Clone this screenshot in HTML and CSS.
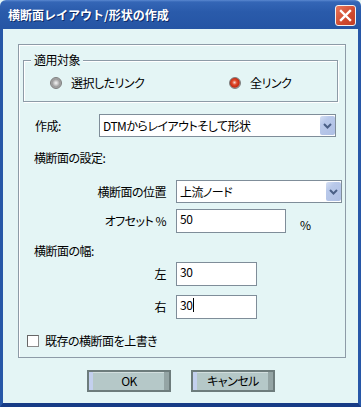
FILE: index.html
```html
<!DOCTYPE html>
<html lang="ja">
<head>
    <meta charset="UTF-8">
    <title>横断面レイアウト/形状の作成</title>
    <link rel="stylesheet" href="styles.css">
</head>
<body>
    <div class="window">
        <div class="titlebar">
            <span class="title">横断面レイアウト/形状の作成</span>
            <button class="close" aria-label="閉じる">
                <svg width="13" height="13" viewBox="0 0 13 13">
                    <path d="M2 2 L11 11 M11 2 L2 11" stroke="#fff" stroke-width="2.4" stroke-linecap="square"/>
                </svg>
            </button>
        </div>

        <div class="frame">
            <div class="panel">
                <div class="group">
                    <span class="legend">適用対象</span>
                    <label class="radio first"><span class="dot"></span>選択したリンク</label>
                    <label class="radio"><span class="dot checked"></span>全リンク</label>
                </div>

                <div class="row create">
                    <span class="create-label">作成:</span>
                    <div class="select wide">
                        <span class="select-text">DTMからレイアウトそして形状</span>
                        <span class="select-arrow">
                            <svg width="9" height="6" viewBox="0 0 9 6"><path d="M1 1 L4.5 4.5 L8 1" fill="none" stroke="#4a5f86" stroke-width="2"/></svg>
                        </span>
                    </div>
                </div>

                <div class="section first-section">横断面の設定:</div>

                <div class="row field position">
                    <span class="field-label">横断面の位置</span>
                    <div class="select narrow">
                        <span class="select-text">上流ノード</span>
                        <span class="select-arrow">
                            <svg width="9" height="6" viewBox="0 0 9 6"><path d="M1 1 L4.5 4.5 L8 1" fill="none" stroke="#4a5f86" stroke-width="2"/></svg>
                        </span>
                    </div>
                </div>

                <div class="row field offset">
                    <span class="field-label">オフセット %</span>
                    <div class="input mid">50</div>
                    <span class="unit">%</span>
                </div>

                <div class="section width-section">横断面の幅:</div>

                <div class="row field left">
                    <span class="field-label">左</span>
                    <div class="input short">30</div>
                </div>

                <div class="row field right">
                    <span class="field-label">右</span>
                    <div class="input short">30<span class="caret"></span></div>
                </div>

                <label class="check"><span class="box"></span>既存の横断面を上書き</label>
            </div>

            <div class="buttons">
                <button class="btn">OK</button>
                <button class="btn">キャンセル</button>
            </div>
        </div>
    </div>
</body>
</html>
```

FILE: styles.css
```css
:root {
    --frame: #2757a7;
    --frame-dark: #173b86;
    --client: #e4f5f5;
    --line: #8d9ba7;
    --field-border: #7f8d99;
    --text: #000000;
}

body {
    margin: 0;
    font-family: "Noto Sans CJK JP", "Noto Sans", sans-serif;
    font-size: 12px;
    font-feature-settings: "palt";
    letter-spacing: -0.5px;
    color: var(--text);
    background: var(--client);
}

.window {
    width: 361px;
    height: 407px;
    overflow: hidden;
}

/* title bar */
.titlebar {
    height: 29px;
    display: flex;
    align-items: center;
    justify-content: space-between;
    padding: 0 5px 0 8px;
    background: linear-gradient(#5a88d0 0, #3466b6 2px, #2a5bab 40%, #2555a4 100%);
    border-radius: 6px 6px 0 0;
    box-sizing: border-box;
}

.title {
    color: #fff;
    font-weight: bold;
    font-size: 12px;
    line-height: 14px;
    letter-spacing: 0;
    text-shadow: 1px 1px 0 #0e2c6a;
    font-feature-settings: normal;
}

.close {
    width: 21px;
    height: 21px;
    padding: 0;
    border: 1px solid #f2f2f2;
    border-radius: 3px;
    background: linear-gradient(135deg, #e9775b, #cf4a2f 60%, #c23d25);
    display: flex;
    align-items: center;
    justify-content: center;
    margin-top: 1px;
}

/* client area */
.frame {
    height: 378px;
    border-left: 3px solid var(--frame);
    border-right: 3px solid var(--frame);
    border-bottom: 4px solid var(--frame-dark);
    box-sizing: border-box;
    background: var(--client);
    padding-top: 15px;
}

.panel {
    width: 328px;
    height: 314px;
    margin-left: 15px;
    border: 1px solid var(--line);
    box-shadow: inset 1px 1px 0 #ffffff;
    box-sizing: border-box;
}

.group {
    position: relative;
    height: 42px;
    margin: 15px 7px 0 4px;
    border: 1px solid var(--line);
    box-shadow: inset 1px 1px 0 #ffffff, 1px 1px 0 #ffffff;
    box-sizing: border-box;
    display: flex;
    align-items: center;
    padding: 3px 0 0 26px;
}

.legend {
    position: absolute;
    top: -8px;
    left: 7px;
    padding: 0 3px;
    line-height: 14px;
    background: var(--client);
}

.radio {
    display: flex;
    align-items: center;
    gap: 9px;
    line-height: 13px;
}

.radio.first {
    width: 179px;
}

.dot {
    width: 10px;
    height: 10px;
    border-radius: 50%;
    border: 1px solid #7d7d7d;
    background: radial-gradient(circle at 50% 50%, #f4f4f4 0, #cfcfcf 25%, #9a9a9a 55%, #c8c8c8 100%);
}

.dot.checked {
    background: radial-gradient(circle at 45% 45%, #f8d8d0 0, #e04a2c 30%, #c52a12 60%, #a9a9a9 75%);
}

/* rows */
.row {
    display: flex;
    align-items: center;
}

.create {
    margin-top: 12px;
    height: 23px;
}

.create-label {
    width: 80px;
    padding-left: 16px;
    box-sizing: border-box;
}

.select {
    display: flex;
    align-items: center;
    height: 23px;
    border: 1px solid var(--field-border);
    background: #ffffff;
    box-sizing: border-box;
}

.select.wide {
    width: 237px;
}

.select.narrow {
    width: 166px;
}

.select-text {
    flex: 1;
    padding-left: 3px;
    line-height: 14px;
}

.select-arrow {
    width: 15px;
    height: 19px;
    border-radius: 2px;
    background: linear-gradient(135deg, #d6e0f4 0, #b9c9ea 30%, #aebfe4 100%);
    display: flex;
    align-items: center;
    justify-content: center;
}

.section {
    line-height: 14px;
    padding-left: 15px;
}

.first-section {
    margin-top: 14px;
}

.width-section {
    margin-top: 11px;
}

.field-label {
    width: 147px;
    margin-right: 10px;
    text-align: right;
    line-height: 14px;
}

.position {
    margin-top: 15px;
    height: 23px;
}

.input {
    height: 24px;
    border: 1px solid var(--field-border);
    background: #ffffff;
    box-sizing: border-box;
    padding: 2px 0 0 3px;
    line-height: 14px;
}

.input.mid {
    width: 110px;
}

.input.short {
    width: 81px;
}

.caret {
    display: inline-block;
    width: 1px;
    height: 14px;
    background: #000;
    vertical-align: top;
    margin-left: 1px;
}

.offset {
    margin-top: 6px;
}

.unit {
    margin-left: 14px;
    padding-top: 6px;
}

.left {
    margin-top: 4px;
}

.right {
    margin-top: 9px;
}

.check {
    display: flex;
    align-items: center;
    gap: 6px;
    margin: 15px 0 0 8px;
    line-height: 14px;
}

.box {
    width: 12px;
    height: 12px;
    border: 1px solid #8a8a8a;
    border-top-color: #666;
    border-left-color: #666;
    background: #ffffff;
    box-sizing: border-box;
}

/* buttons */
.buttons {
    display: flex;
    justify-content: center;
    gap: 20px;
    margin-top: 12px;
    padding-left: 1px;
}

.btn {
    width: 84px;
    height: 22px;
    padding: 0;
    font-family: inherit;
    font-size: 12px;
    font-weight: normal;
    font-feature-settings: "palt";
    letter-spacing: -0.5px;
    color: #000;
    border: 2px solid #6d7c7c;
    box-shadow: inset 4px 0 0 #c3d0ee, inset -5px 0 0 #94a4a4, inset 0 1px 0 #d2dede;
    background: #b5c8c8;
    line-height: 16px;
}
```
